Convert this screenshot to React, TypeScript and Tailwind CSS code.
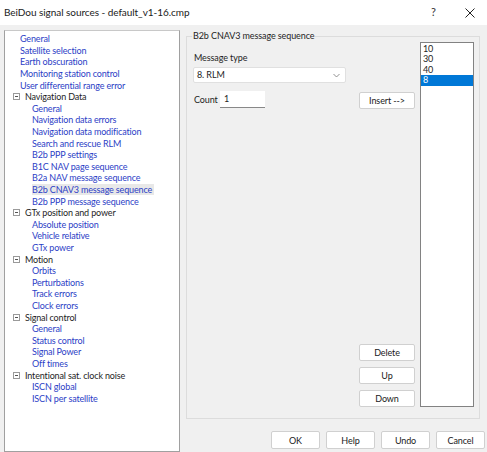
import React from 'react';

type Node = { label: string; level: 0 | 1; group?: boolean; selected?: boolean };

const tree: Node[] = [
  { label: 'General', level: 0 },
  { label: 'Satellite selection', level: 0 },
  { label: 'Earth obscuration', level: 0 },
  { label: 'Monitoring station control', level: 0 },
  { label: 'User differential range error', level: 0 },
  { label: 'Navigation Data', level: 0, group: true },
  { label: 'General', level: 1 },
  { label: 'Navigation data errors', level: 1 },
  { label: 'Navigation data modification', level: 1 },
  { label: 'Search and rescue RLM', level: 1 },
  { label: 'B2b PPP settings', level: 1 },
  { label: 'B1C NAV page sequence', level: 1 },
  { label: 'B2a NAV message sequence', level: 1 },
  { label: 'B2b CNAV3 message sequence', level: 1, selected: true },
  { label: 'B2b PPP message sequence', level: 1 },
  { label: 'GTx position and power', level: 0, group: true },
  { label: 'Absolute position', level: 1 },
  { label: 'Vehicle relative', level: 1 },
  { label: 'GTx power', level: 1 },
  { label: 'Motion', level: 0, group: true },
  { label: 'Orbits', level: 1 },
  { label: 'Perturbations', level: 1 },
  { label: 'Track errors', level: 1 },
  { label: 'Clock errors', level: 1 },
  { label: 'Signal control', level: 0, group: true },
  { label: 'General', level: 1 },
  { label: 'Status control', level: 1 },
  { label: 'Signal Power', level: 1 },
  { label: 'Off times', level: 1 },
  { label: 'Intentional sat. clock noise', level: 0, group: true },
  { label: 'ISCN global', level: 1 },
  { label: 'ISCN per satellite', level: 1 },
];

const sequence = ['10', '30', '40', '8'];

function WinButton({ children, className = '' }: { children: React.ReactNode; className?: string }) {
  return (
    <button
      type="button"
      className={`h-[17px] bg-white border border-[#d0d0d0] rounded-[2px] text-[9px] tracking-[-0.1px] text-[#1a1a1a] leading-none flex items-center justify-center ${className}`}
    >
      {children}
    </button>
  );
}

function Expander() {
  return (
    <span className="w-[7px] h-[7px] border border-[#9a9a9a] flex items-center justify-center mr-[5px] ml-[8px]">
      <span className="w-[3px] h-px bg-[#555]" />
    </span>
  );
}

export default function App() {
  return (
    <div
      className="w-[487px] h-[452px] bg-[#f0f0f0] flex flex-col overflow-hidden"
      style={{ fontFamily: 'Lato, "Noto Sans", sans-serif' }}
    >
      {/* title bar */}
      <div className="h-[25px] bg-white flex items-center shrink-0">
        <span className="ml-[4px] text-[10px] tracking-[-0.05px] text-[#1a1a1a]">BeiDou signal sources - default_v1-16.cmp</span>
        <span className="ml-auto mr-[29px] text-[11px] text-[#333]">?</span>
        <svg width="10" height="10" viewBox="0 0 10 10" className="mr-[12px]">
          <path d="M0.5 0.5 L9.5 9.5 M9.5 0.5 L0.5 9.5" stroke="#222" strokeWidth="1" />
        </svg>
      </div>

      <div className="flex pt-[5px]">
        {/* tree */}
        <div className="ml-[4px] w-[176px] h-[422px] bg-white border border-[#a0a0a0] border-t-[#c8c8c8] pt-[2px]">
          {tree.map((n, i) => (
            <div key={i} className="h-[11.6px] flex items-center text-[9px] tracking-[-0.15px] leading-none whitespace-nowrap">
              {n.group ? (
                <>
                  <Expander />
                  <span className="text-[#1e1e1e]">{n.label}</span>
                </>
              ) : (
                <span
                  className={`text-[#2c3ec6] ${n.level === 0 ? 'ml-[15px]' : 'ml-[27px]'} ${
                    n.selected ? 'bg-[#e8e8e8] py-[1px] pr-[2px]' : ''
                  }`}
                >
                  {n.label}
                </span>
              )}
            </div>
          ))}
        </div>

        {/* right side */}
        <div className="ml-[6px] flex flex-col text-[9px] tracking-[-0.1px]">
          <div className="relative mt-[6px] w-[294px] h-[383px] border border-[#dcdcdc] flex items-start pl-[6px] pt-[5px]">
            <span className="absolute left-[5px] -top-[7px] px-[1px] bg-[#f0f0f0] text-[#1e1e1e] leading-[12px]">
              B2b CNAV3 message sequence
            </span>

            {/* left column */}
            <div className="w-[153px] flex flex-col">
              <div className="mt-[10px] text-[#1e1e1e] leading-[12px] pl-[1px]">Message type</div>
              <div className="mt-[3px] h-[16px] bg-white border border-[#e0e0e0] rounded-[2px] flex items-center pl-[3px] pr-[5px] text-[#1e1e1e]">
                <span>8. RLM</span>
                <svg width="7" height="5" viewBox="0 0 7 5" className="ml-auto">
                  <path d="M0.5 1 L3.5 4 L6.5 1" stroke="#777" strokeWidth="0.8" fill="none" />
                </svg>
              </div>
              <div className="mt-[8px] flex items-center">
                <span className="pl-[1px] text-[#1e1e1e] w-[27px]">Count</span>
                <div className="w-[45px] h-[17px] bg-white border-b border-b-[#888] flex items-start pl-[4px] pt-[1px] text-[#1e1e1e]">
                  1
                </div>
              </div>
            </div>

            {/* buttons column */}
            <div className="ml-[13px] w-[56px] self-stretch flex flex-col pb-[11px]">
              <WinButton className="mt-[50px]">Insert --&gt;</WinButton>
              <div className="mt-auto flex flex-col gap-[6px]">
                <WinButton>Delete</WinButton>
                <WinButton>Up</WinButton>
                <WinButton>Down</WinButton>
              </div>
            </div>

            {/* sequence list */}
            <div className="ml-[5px] w-[54px] h-[365px] bg-white border border-[#828282] pt-[1px]">
              {sequence.map((s, i) => (
                <div
                  key={i}
                  className={`h-[10.4px] pl-[2px] leading-[10.4px] ${
                    i === 3 ? 'bg-[#0078d7] text-white' : 'text-[#1e1e1e]'
                  }`}
                >
                  {s}
                </div>
              ))}
            </div>
          </div>

          <div className="mt-[12px] w-[299px] flex justify-end gap-[6px]">
            <WinButton className="w-[49px] h-[18px]">OK</WinButton>
            <WinButton className="w-[49px] h-[18px]">Help</WinButton>
            <WinButton className="w-[49px] h-[18px]">Undo</WinButton>
            <WinButton className="w-[49px] h-[18px]">Cancel</WinButton>
          </div>
        </div>
      </div>
    </div>
  );
}
